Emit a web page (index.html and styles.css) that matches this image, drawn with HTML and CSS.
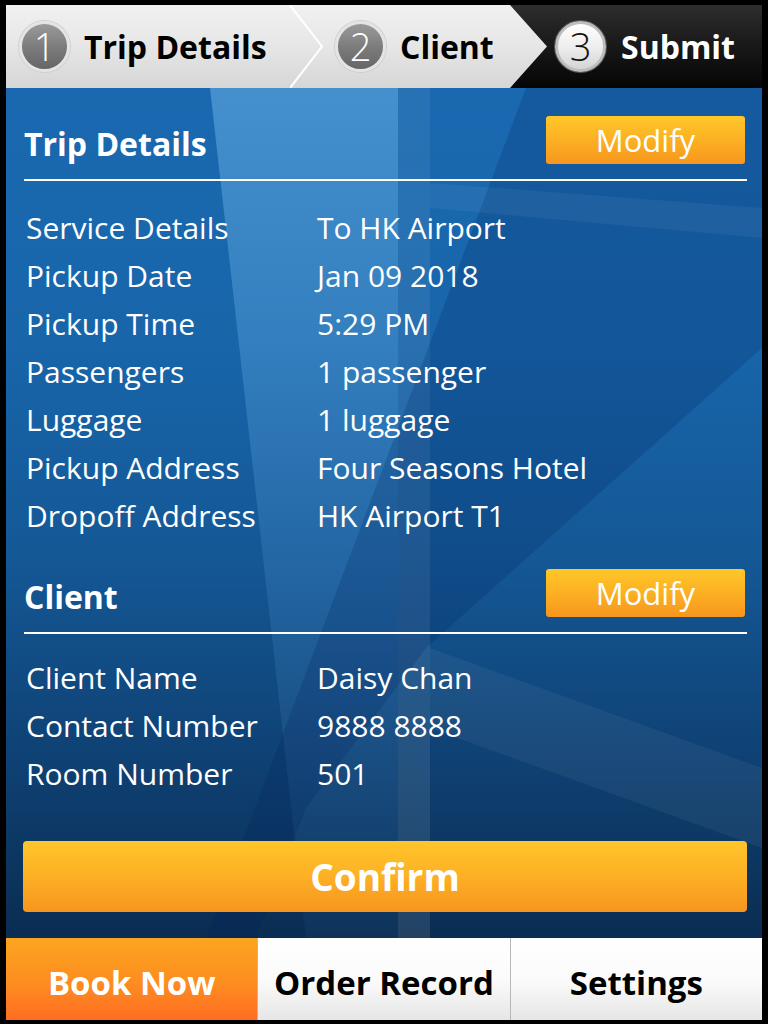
FILE: index.html
```html
<!DOCTYPE html>
<html lang="en">
<head>
<meta charset="utf-8">
<title>Submit</title>
<link rel="stylesheet" href="styles.css">
</head>
<body>
<div class="app">
  <header class="steps">
    <div class="steps-light">
      <div class="step step-1">
        <span class="num num-gray">1</span>
        <span class="step-label">Trip Details</span>
      </div>
      <svg class="chev" width="34" height="83" viewBox="0 0 34 83" aria-hidden="true">
        <polyline points="0,0 32,41.5 0,83" fill="none" stroke="#ffffff" stroke-width="2"/>
      </svg>
      <div class="step step-2">
        <span class="num num-gray">2</span>
        <span class="step-label">Client</span>
      </div>
    </div>
    <div class="step step-3">
      <span class="num num-light">3</span>
      <span class="step-label step-label-white">Submit</span>
    </div>
  </header>

  <main class="content">
    <div class="beam beam-a"></div>
    <div class="beam beam-b"></div>
    <div class="beam beam-c"></div>
    <div class="beam beam-d"></div>
    <div class="beam beam-e"></div>

    <section class="section">
      <div class="section-head">
        <h2 class="section-title">Trip Details</h2>
        <button class="btn-modify">Modify</button>
      </div>
      <dl class="rows">
        <div class="row"><dt>Service Details</dt><dd>To HK Airport</dd></div>
        <div class="row"><dt>Pickup Date</dt><dd>Jan 09 2018</dd></div>
        <div class="row"><dt>Pickup Time</dt><dd>5:29 PM</dd></div>
        <div class="row"><dt>Passengers</dt><dd>1 passenger</dd></div>
        <div class="row"><dt>Luggage</dt><dd>1 luggage</dd></div>
        <div class="row"><dt>Pickup Address</dt><dd>Four Seasons Hotel</dd></div>
        <div class="row"><dt>Dropoff Address</dt><dd>HK Airport T1</dd></div>
      </dl>
    </section>

    <section class="section section-client">
      <div class="section-head">
        <h2 class="section-title">Client</h2>
        <button class="btn-modify">Modify</button>
      </div>
      <dl class="rows rows-client">
        <div class="row"><dt>Client Name</dt><dd>Daisy Chan</dd></div>
        <div class="row"><dt>Contact Number</dt><dd>9888 8888</dd></div>
        <div class="row"><dt>Room Number</dt><dd>501</dd></div>
      </dl>
    </section>

    <button class="btn-confirm">Confirm</button>
  </main>

  <nav class="tabbar">
    <a class="tab tab-active">Book Now</a>
    <a class="tab">Order Record</a>
    <a class="tab">Settings</a>
  </nav>
</div>
</body>
</html>
```

FILE: styles.css
```css
* { box-sizing: border-box; }

html, body {
  margin: 0;
  padding: 0;
  background: #000;
}

body {
  font-family: "Open Sans", "Noto Sans", "Liberation Sans", sans-serif;
  color: #fff;
}

.app {
  width: 768px;
  height: 1024px;
  padding: 5px 6px 4px 6px;
  display: flex;
  flex-direction: column;
}

/* ---------- step header ---------- */
.steps {
  height: 83px;
  flex: none;
  display: flex;
  background: linear-gradient(180deg, #2e2e2e 0%, #1a1a1a 45%, #050505 100%);
}

.steps-light {
  width: 541px;
  flex: none;
  display: flex;
  align-items: stretch;
  background: linear-gradient(180deg, #f1f1f1 0%, #e6e6e6 50%, #d6d6d6 100%);
  clip-path: polygon(0 0, 504px 0, 541px 50%, 504px 100%, 0 100%);
}

.step {
  display: flex;
  align-items: center;
  gap: 14px;
}

.step-1 {
  width: 284px;
  padding-left: 13px;
}

.chev { flex: none; display: block; }

.step-2 {
  padding-left: 11px;
}

.step-3 {
  flex: 1;
  padding-left: 8px;
  gap: 15px;
}

.num {
  width: 51px;
  height: 51px;
  border-radius: 50%;
  flex: none;
  display: flex;
  align-items: center;
  justify-content: center;
  font-weight: 300;
  font-size: 38px;
  line-height: 1;
  padding-bottom: 2px;
}

.num-gray {
  color: #fff;
  background: linear-gradient(180deg, #9a9a9a 0%, #7a7a7a 55%, #666 100%);
  border: 3px solid #e4e4e4;
  box-shadow: 0 0 0 1px #cfcfcf;
}

.num-light {
  color: #111;
  background: linear-gradient(180deg, #ffffff 0%, #ececec 55%, #d4d4d4 100%);
  border: 3px solid #bdbdbd;
  box-shadow: 0 0 0 1px #555;
}

.step-label {
  font-weight: 700;
  font-size: 32px;
  letter-spacing: 0;
  color: #000;
}

.step-label-white { color: #fff; }

/* ---------- content ---------- */
.content {
  position: relative;
  height: 850px;
  flex: none;
  overflow: hidden;
  padding: 28px 15px 0 18px;
  display: flex;
  flex-direction: column;
  background: linear-gradient(180deg, #1a69b0 0%, #1865aa 30%, #145896 55%, #0f4275 78%, #0a2d52 100%);
}

.beam {
  position: absolute;
  pointer-events: none;
}

.beam-a {
  inset: 0;
  background: linear-gradient(180deg, rgba(120, 190, 240, 0.45) 0%, rgba(90, 160, 220, 0.22) 55%, rgba(60, 120, 180, 0.08) 100%);
  clip-path: polygon(204px 0, 392px 0, 392px 850px, 300px 850px);
}

.beam-b {
  inset: 0;
  background: linear-gradient(180deg, rgba(255, 255, 255, 0.06), rgba(255, 255, 255, 0.1));
  clip-path: polygon(392px 0, 424px 0, 424px 850px, 392px 850px);
}

.beam-c {
  inset: 0;
  background: rgba(0, 30, 90, 0.2);
  clip-path: polygon(520px 0, 756px 0, 756px 260px, 420px 560px, 300px 720px, 250px 850px, 200px 850px);
}

.beam-d {
  inset: 0;
  background: rgba(255, 255, 255, 0.05);
  clip-path: polygon(424px 560px, 756px 680px, 756px 760px, 424px 640px);
}

.beam-e {
  inset: 0;
  background: rgba(255, 255, 255, 0.05);
  clip-path: polygon(424px 95px, 756px 120px, 756px 150px, 424px 120px);
}

.section {
  position: relative;
}

.section-client {
  margin-top: 30px;
}

.section-head {
  display: flex;
  justify-content: space-between;
  align-items: flex-start;
  border-bottom: 2px solid #fff;
  padding-bottom: 15px;
}

.section-title {
  margin: 0;
  padding-top: 8px;
  font-weight: 700;
  font-size: 32px;
  line-height: 40px;
  letter-spacing: 0;
}

.btn-modify {
  width: 199px;
  height: 48px;
  margin-right: 2px;
  border: 0;
  border-radius: 3px;
  background: linear-gradient(180deg, #ffc72a 0%, #fcb023 50%, #f7961e 100%);
  color: #fff;
  font-family: inherit;
  font-size: 31px;
  font-weight: 400;
  letter-spacing: 0;
  line-height: 48px;
  padding: 0;
}

.rows {
  margin: 22px 0 0;
  padding: 0;
}

.rows-client {
  margin-top: 19px;
}

.row {
  display: flex;
  height: 48px;
  align-items: center;
  font-size: 30px;
  letter-spacing: 0;
}

.row dt {
  width: 293px;
  flex: none;
  padding-left: 2px;
}

.row dd {
  margin: 0;
}

.btn-confirm {
  position: relative;
  margin-top: 44px;
  margin-left: -1px;
  height: 71px;
  width: 724px;
  border: 0;
  border-radius: 4px;
  background: linear-gradient(180deg, #ffc52a 0%, #fdb025 50%, #f7951f 100%);
  color: #fff;
  font-family: inherit;
  font-weight: 700;
  font-size: 37px;
  letter-spacing: 0;
  padding: 0;
}

/* ---------- tab bar ---------- */
.tabbar {
  height: 82px;
  flex: none;
  display: flex;
}

.tab {
  flex: 1;
  display: flex;
  align-items: center;
  justify-content: center;
  padding-top: 6px;
  font-weight: 700;
  font-size: 33px;
  letter-spacing: 0;
  color: #000;
  background: linear-gradient(180deg, #ffffff 0%, #fbfbfb 50%, #e6e6e6 100%);
  border-left: 1px solid #b8b8b8;
}

.tab-active {
  border-left: 0;
  color: #fff;
  background: linear-gradient(180deg, #fca51f 0%, #fd8d20 55%, #ff6c22 100%);
}
```
